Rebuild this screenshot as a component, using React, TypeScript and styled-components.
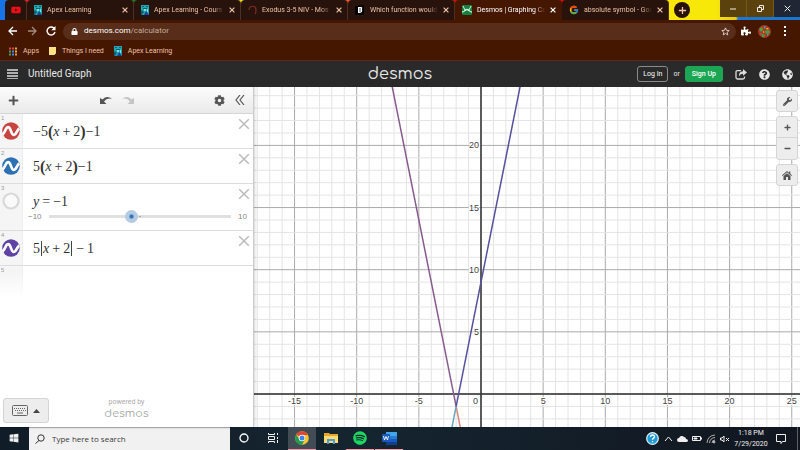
import React from "react";
import styled, { createGlobalStyle, css } from "styled-components";
import {
  FaWindows,
  FaSpotify,
  FaWrench,
  FaQuestionCircle,
  FaGlobeAmericas,
  FaYoutube,
  FaLock,
  FaCog,
  FaPlus,
  FaMinus,
  FaPuzzlePiece,
} from "react-icons/fa";
import { FcGoogle } from "react-icons/fc";

const ui = `"Open Sans", "Noto Sans", sans-serif`;
const compact = `Roboto, "Liberation Sans", sans-serif`;
const arial = `"Liberation Sans", Arial, sans-serif`;

const GlobalStyle = createGlobalStyle`
  *, *::before, *::after { box-sizing: border-box; }
  body { margin: 0; background: #fff; overflow: hidden; }
  button, input { font: inherit; color: inherit; border: 0; padding: 0; margin: 0; background: none; }
  a { color: inherit; text-decoration: none; }
  svg { display: block; flex: none; }
`;

const Page = styled.div`
  display: flex;
  flex-direction: column;
  height: 100vh;
  font-family: ${ui};
`;

const TabStrip = styled.nav`
  display: flex;
  flex: none;
  height: 20px;
  padding-left: 5px;
  background: linear-gradient(90deg, #1673e8 0 10px, #e8202c 15px 70px, #14801c 90px 170px, #f2dc10 190px 280px, #ff5a1c 300px 400px, #d01008 410px 600px, #f8e80a 640px 715px, #e6c81a 736px, #1a78d0 738px);
`;

const Tab = styled.div<{ $active?: boolean; $pinned?: boolean }>`
  display: flex;
  align-items: center;
  gap: 5px;
  flex: ${(p) => (p.$pinned ? "0 0 22px" : "0 1 107px")};
  min-width: 0;
  padding: ${(p) => (p.$pinned ? "0 0 0 6px" : "0 5px 0 7px")};
  border-radius: 4px 4px 0 0;
  border-right: 1px solid ${(p) => (p.$active ? "#451600" : "#4d3022")};
  background: ${(p) => (p.$active ? "#451700" : "#28130c")};
  color: ${(p) => (p.$active ? "#fff" : "#edc3a5")};
`;

const TabLabel = styled.a`
  flex: 1;
  min-width: 0;
  overflow: hidden;
  white-space: nowrap;
  font: 7px/12px ${compact};
  mask-image: linear-gradient(90deg, #000 85%, transparent);
`;

const IconButton = styled.button`
  display: grid;
  place-items: center;
  flex: none;
`;

const NewTab = styled(IconButton)`
  width: 16px;
  height: 16px;
  margin: 2px 0 0 5px;
  border-radius: 50%;
  background: #28130c;
  color: #f0c8a8;
`;

const WindowControls = styled.div`
  display: flex;
  margin-left: auto;
  height: 17px;
`;

const WindowButton = styled(IconButton)<{ $close?: boolean }>`
  width: ${(p) => (p.$close ? "26px" : "27px")};
  border-right: ${(p) => (p.$close ? "0" : "1px solid #75591a")};
  background: ${(p) => (p.$close ? "#202634" : "#5b420c")};
  color: #eee;
`;

const AddressRow = styled.div`
  display: flex;
  align-items: center;
  flex: none;
  height: 22px;
  padding: 0 8px 0 6px;
  gap: 5px;
  background: #451700;
  color: #fff;
`;

const NavButton = styled(IconButton)<{ $dim?: boolean }>`
  width: 14px;
  height: 14px;
  opacity: ${(p) => (p.$dim ? 0.5 : 1)};
`;

const AddressBox = styled.label`
  display: flex;
  flex: 1;
  align-items: center;
  height: 17px;
  padding: 0 6px 0 8px;
  border-radius: 9px;
  background: #582d19;
  font: 8px/12px ${compact};
`;

const Host = styled.span`
  margin-left: 6px;
`;

const PathInput = styled.input`
  flex: 1;
  min-width: 0;
  color: #c3aa9d;
  outline: none;
`;

const AddressActions = styled.div`
  display: flex;
  align-items: center;
  gap: 7px;
`;

const Bookmarks = styled.nav`
  display: flex;
  align-items: center;
  flex: none;
  gap: 10px;
  height: 19px;
  padding-left: 9px;
  border-bottom: 1px solid #5c2a12;
  background: #451700;
  color: #edc3a5;
  font: 7px/12px ${compact};
`;

const Bookmark = styled.a`
  display: flex;
  align-items: center;
  gap: 6px;
`;

const AppHeader = styled.header`
  display: grid;
  grid-template-columns: 1fr auto 1fr;
  align-items: center;
  flex: none;
  height: 26px;
  padding: 0 7px;
  background: #2a2a2a;
  color: #e8e8e8;
  font: 10px/14px ${compact};
`;

const HeaderSide = styled.div<{ $end?: boolean }>`
  display: flex;
  align-items: center;
  justify-content: ${(p) => (p.$end ? "flex-end" : "flex-start")};
  gap: ${(p) => (p.$end ? "12px" : "9px")};
`;

const Account = styled.div`
  display: flex;
  align-items: center;
  gap: 5px;
  font-size: 7px;
`;

const AccountButton = styled.button<{ $primary?: boolean }>`
  height: 16px;
  padding: 0 ${(p) => (p.$primary ? "6px" : "5px")};
  border-radius: 3px;
  border: 1px solid ${(p) => (p.$primary ? "#1ca653" : "#8a8a8a")};
  background: ${(p) => (p.$primary ? "#1ca653" : "transparent")};
  color: #fff;
  font-weight: ${(p) => (p.$primary ? 500 : 400)};
  line-height: 14px;
  white-space: nowrap;
`;

const Wordmark = styled.span<{ $small?: boolean }>`
  font-family: Comfortaa, Lato, sans-serif;
  font-size: ${(p) => (p.$small ? "11px" : "16px")};
  line-height: ${(p) => (p.$small ? "14px" : "22px")};
`;

const Main = styled.main`
  display: flex;
  flex: 1;
  min-height: 0;
`;

const Panel = styled.section`
  display: flex;
  flex-direction: column;
  flex: none;
  width: 254px;
  border-right: 1px solid #ccc;
  box-shadow: 0 0 3px rgba(0, 0, 0, 0.3);
  background: #fff;
  z-index: 1;
`;

const PanelBar = styled.div`
  display: flex;
  align-items: center;
  justify-content: space-between;
  flex: none;
  height: 27px;
  padding: 0 8px;
  border-bottom: 1px solid #d5d5d5;
  background: linear-gradient(#fcfcfc, #eaeaea);
  color: #555;
`;

const BarGroup = styled.div`
  display: flex;
  align-items: center;
  gap: 10px;
`;

const ExpressionList = styled.ol`
  flex: 1;
  margin: 0;
  padding: 0;
  list-style: none;
`;

const Row = styled.li<{ $tall?: boolean; $last?: boolean }>`
  display: flex;
  height: ${(p) => (p.$tall ? "47px" : "35px")};
  border-bottom: ${(p) => (p.$last ? "0" : "1px solid #ddd")};
`;

const Gutter = styled.div<{ $fade?: boolean }>`
  display: flex;
  flex-direction: column;
  flex: none;
  width: 23px;
  padding: 1px 1px 0 1px;
  border-right: 1px solid #eee;
  background: #f5f5f5;
  color: #999;
  font: 6px/7px ${arial};
  ${(p) => p.$fade && css`mask-image: linear-gradient(#000 20%, transparent 90%);`}
`;

const RowBody = styled.div`
  flex: 1;
  min-width: 0;
  padding: 9px 0 0 10px;
`;

const Formula = styled.div`
  display: flex;
  align-items: center;
  height: 17px;
  color: #333;
  font: 14px/17px "Liberation Serif", serif;
  white-space: pre;
`;

const Op = styled.span<{ $tight?: boolean }>`
  padding: 0 ${(p) => (p.$tight ? "0" : "3px")};
`;

const Paren = styled.span`
  font-size: 16px;
  font-weight: 700;
  line-height: 16px;
`;

const Bar = styled.span`
  width: 1px;
  height: 15px;
  margin: 0 1px;
  background: #444;
`;

const DeleteButton = styled(IconButton)`
  align-self: flex-start;
  width: 14px;
  height: 14px;
  margin: 3px 2px 0 0;
  color: #bbb;
`;

const SliderRow = styled.div`
  display: flex;
  align-items: center;
  gap: 7px;
  height: 13px;
  margin: 0 -10px 0 -5px;
  color: #888;
  font: 8px/13px ${arial};
`;

const Slider = styled.input`
  appearance: none;
  width: 184px;
  height: 13px;
  background:
    radial-gradient(circle at 50% 50%, #aaa 1px, transparent 1px),
    linear-gradient(#e0e0e0, #e0e0e0) center / 100% 3px no-repeat;
  &::-webkit-slider-thumb {
    appearance: none;
    width: 13px;
    height: 13px;
    border-radius: 50%;
    background: radial-gradient(circle, #2d70b3 1px, #b5cbe2 3px);
  }
`;

const PanelFoot = styled.footer`
  display: grid;
  grid-template-columns: 46px 1fr 46px;
  flex: none;
  padding: 0 3px 4px;
`;

const KeypadButton = styled.button`
  display: flex;
  align-items: center;
  justify-content: center;
  gap: 5px;
  height: 25px;
  border: 1px solid #d3d3d3;
  border-radius: 3px;
  background: #ededed;
  color: #444;
`;

const Powered = styled.a`
  display: flex;
  flex-direction: column;
  align-items: center;
  color: #aaa;
  font: 7px/9px ${compact};
`;

const GraphArea = styled.section`
  display: grid;
  grid-template: minmax(0, 1fr) / minmax(0, 1fr);
  flex: 1;
  min-width: 0;
  background: #fff;
`;

const Plot = styled.svg`
  grid-area: 1 / 1;
  width: 100%;
  height: 100%;
  font: 9px ${arial};
`;

const GraphTools = styled.div`
  grid-area: 1 / 1;
  display: flex;
  flex-direction: column;
  gap: 4px;
  justify-self: end;
  align-self: start;
  margin: 3px 2px 0 0;
  color: #555;
`;

const ToolGroup = styled.div`
  width: 22px;
  border: 1px solid #d5d5d5;
  border-radius: 3px;
  background: #ededed;
`;

const ToolButton = styled(IconButton)`
  width: 20px;
  height: 20px;
  & + & {
    height: 22px;
    border-top: 1px solid #d5d5d5;
  }
`;

const Taskbar = styled.footer`
  display: flex;
  flex: none;
  height: 23px;
  background: linear-gradient(90deg, #101c28, #152530 45%, #11161f);
  color: #f0f0f0;
`;

const TaskButton = styled(IconButton)<{ $open?: boolean; $active?: boolean }>`
  width: 28px;
  margin-right: 1px;
  background: ${(p) => (p.$active ? "#414c55" : "transparent")};
  border-bottom: 1px solid ${(p) => (p.$open || p.$active ? "#f49aa0" : "transparent")};
`;

const Search = styled.label`
  display: flex;
  align-items: center;
  gap: 7px;
  width: 201px;
  padding-left: 6px;
  border-top: 1px solid #bbb;
  background: #f1f1f1;
  color: #333;
`;

const SearchInput = styled.input`
  flex: 1;
  min-width: 0;
  font-size: 8px;
  line-height: 14px;
  outline: none;
  &::placeholder { color: #3a3a3a; opacity: 1; }
`;

const Tray = styled.div`
  display: flex;
  align-items: center;
  gap: 4px;
  margin-left: auto;
  padding-right: 7px;
`;

const Clock = styled.time`
  width: 34px;
  text-align: center;
  white-space: nowrap;
  font: 7px/11px ${compact};
`;

const ShowDesktop = styled.button`
  width: 3px;
  border-left: 1px solid #59616a;
`;

const Apex = () => (
  <svg width="8" height="10" viewBox="0 0 8 10">
    <path fill="#22a7ae" d="M0 0h8v10H0z" />
    <path fill="#0d626d" d="M1 1h2v1H1zM5 1h2v1H5zM2 3h4v1H2zM1 5l2 2-2 3H0V6z" />
    <path fill="#1c3f96" d="M5 6l3 4H3z" />
    <path fill="#7de0de" d="M3 4h2v2H3zM6 4h1v3H6z" />
  </svg>
);

const Cross = ({ size = 7, width = 1.2 }: { size?: number; width?: number }) => (
  <svg width={size} height={size} viewBox="0 0 10 10" fill="none" stroke="currentColor" strokeWidth={(width * 10) / size}>
    <path d="M1 1l8 8M9 1L1 9" />
  </svg>
);

const Plus = ({ size = 9 }: { size?: number }) => (
  <svg width={size} height={size} viewBox="0 0 10 10" stroke="currentColor" strokeWidth="1.4">
    <path d="M5 1v8M1 5h8" />
  </svg>
);

const Moses = () => (
  <svg width="9" height="10" viewBox="0 0 9 10" fill="none" stroke="#7d2b20" strokeWidth="1.2">
    <path d="M1 5C1 0 8 0 8 5q0 3-1 4" />
  </svg>
);

const Brainly = () => (
  <svg width="10" height="10" viewBox="0 0 10 10">
    <path fill="#000" d="M0 1l9-1v10H0z" />
    <path fill="#fff" d="M3 2h3q2 0 1 2 1 4-3 4H3z" />
    <path stroke="#000" strokeWidth=".7" d="M4 4h2M4 6h2" />
  </svg>
);

const DesmosIcon = () => (
  <svg width="10" height="10" viewBox="0 0 10 10" fill="none">
    <rect width="10" height="10" rx="1" fill="#15803f" />
    <path stroke="#d8f2df" strokeWidth="1" d="M1 1l2.500 5M9 1L6.500 6" />
    <path stroke="#d8f2df" strokeWidth="1.300" d="M0 7q2 0 3-1.500 2-2 4 0Q8 7 10 7" />
  </svg>
);

const Arrow = ({ right = false }: { right?: boolean }) => (
  <svg width="10" height="10" viewBox="0 0 10 10" fill="none" stroke="currentColor" strokeWidth="1.3">
    <path d={right ? "M1 5h8M5 1l4 4-4 4" : "M9 5H1M5 1L1 5l4 4"} />
  </svg>
);

const Reload = () => (
  <svg width="10" height="10" viewBox="0 0 10 10" fill="none" stroke="currentColor" strokeWidth="1.4">
    <path d="M8 2.2A4 4 0 1 0 9 6" />
    <path d="M9.5 0v4.2H5.3z" fill="currentColor" stroke="none" />
  </svg>
);

const Star = () => (
  <svg width="9" height="9" viewBox="0 0 20 20" fill="none" stroke="#e6d6cd" strokeWidth="2">
    <path d="M10 2l2.3 5.4 5.9.5-4.5 3.9 1.4 5.8L10 14.5l-5.1 3.1 1.4-5.8L1.800 7.900l5.900-.5z" />
  </svg>
);

const Avatar = () => (
  <svg width="13" height="13" viewBox="0 0 13 13">
    <circle cx="6.500" cy="6.500" r="6.500" fill="#a93a20" />
    <path fill="#3fa646" d="M1 4l3-2 1 3-2 2zM7 6l4-1 1 3-4 1zM4 9l3 1-1 2H4z" />
    <path fill="#35a7c4" d="M2 8l2 1-1 1zM6 1l2 1-2 2zM9 9l2 0-2 2z" />
    <path fill="#e4ae3a" d="M8 3l3 0-2 2zM5 6l2 1-2 1z" />
  </svg>
);

const AppsGrid = () => (
  <svg width="8" height="9" viewBox="0 0 8 9">
    {["#e04a3b", "#e04a3b", "#e8b33a", "#43a35a", "#4287e8", "#e8b33a", "#43a35a", "#4287e8", "#e0a03a"].map((c, i) => (
      <rect key={i} x={(i % 3) * 3} y={Math.floor(i / 3) * 3 + 0.5} width="2" height="2" fill={c} />
    ))}
  </svg>
);

const Note = () => (
  <svg width="7" height="8" viewBox="0 0 7 8">
    <path fill="#ffe183" d="M0 0h7v6L5 8H0z" />
    <path fill="#fff6cc" d="M5 8V6h2z" />
  </svg>
);

const Share = () => (
  <svg width="12" height="11" viewBox="0 0 12 11" fill="none" stroke="#ddd" strokeWidth="1.3">
    <path d="M6 1.600H2.500Q1 1.600 1 3v5.500Q1 10 2.500 10H8q1.500 0 1.500-1.500V7.500" />
    <path d="M8 0l4 3.400L8 6.700V4.700Q5 4.500 4 7.500 3.500 2.500 8 2.200z" fill="#ddd" stroke="none" />
  </svg>
);

const Home = () => (
  <svg width="10" height="9" viewBox="0 0 10 9" fill="currentColor">
    <path d="M5 0l2 1.700V.6h1.300v2.200L10 4.200l-.6.7L5 1.300.6 4.900 0 4.200z" />
    <path d="M5 2.200l3.500 2.900V9H6V6H4v3H1.500V5.100z" />
  </svg>
);

const Undo = ({ flip = false }: { flip?: boolean }) => (
  <svg width="12" height="9" viewBox="0 0 12 9" fill={flip ? "#c4c4c4" : "#555"}>
    <path d={flip ? "M0 3Q5-1 9.500 3.500L12 2v6H5.500L8 5.500Q5 1.500 0 3z" : "M12 3Q7-1 2.500 3.500L0 2v6h6.500L4 5.500Q7 1.500 12 3z"} />
  </svg>
);

const Collapse = () => (
  <svg width="10" height="10" viewBox="0 0 10 10" fill="none" stroke="currentColor" strokeWidth="1.200">
    <path d="M5 0L1 5l4 5M9 0L5 5l4 5" />
  </svg>
);

const Curve = ({ color }: { color: string }) => (
  <svg width="18" height="18" viewBox="0 0 18 18">
    {color ? (
      <>
        <circle cx="9" cy="9" r="8.800" fill={color} />
        <path d="M.5 12.500C3 11.500 3.500 5 6.200 5.200 9 5.400 9 13 11.800 13c2.500 0 3-5 5.500-6.500" fill="none" stroke="#fff" strokeWidth="2.700" />
      </>
    ) : (
      <circle cx="9" cy="9" r="7.500" fill="#fafafa" stroke="#d8d8d8" strokeWidth="2.200" />
    )}
  </svg>
);

const Keyboard = () => (
  <svg width="16" height="11" viewBox="0 0 16 11" fill="none" stroke="#666">
    <rect x=".5" y=".5" width="15" height="10" rx="1" />
    <path strokeDasharray="1 1" d="M2 3.500h12M3 5.500h11" />
    <path d="M5 8h6" />
  </svg>
);

const Chrome = () => (
  <svg width="14" height="14" viewBox="0 0 14 14">
    <circle cx="7" cy="7" r="6.800" fill="#f7c52d" />
    <path d="M7 7L1.100 3.600A6.800 6.800 0 0 1 12.900 3.600L12.900 4H7z" fill="#df4638" />
    <path d="M1.100 3.600A6.800 6.800 0 0 0 7 13.800L9.700 8.500 7 7 4.300 8.500z" fill="#249b55" />
    <circle cx="7" cy="7" r="3.200" fill="#fff" />
    <circle cx="7" cy="7" r="2.500" fill="#4085ef" />
  </svg>
);

const TaskView = () => (
  <svg width="11" height="10" viewBox="0 0 11 10" fill="none" stroke="currentColor">
    <path d="M.5 0v1.500h6V0M.5 10V8.500h6V10M.5 3.500h6v3h-6zM9.500 0v2M9.500 4v2M9.500 7v3" />
  </svg>
);

const Folder = () => (
  <svg width="14" height="12" viewBox="0 0 14 12">
    <path fill="#e5a72c" d="M0 1h5l1 1h8v9H0z" />
    <path fill="#ffdb72" d="M0 4h14v7H0z" />
    <path fill="#4a9bd6" d="M3 7h8v5H9V9H5v3H3z" />
  </svg>
);

const Word = () => (
  <svg width="15" height="13" viewBox="0 0 15 13">
    <path fill="#41a5ee" d="M4 0h11v4H4z" />
    <path fill="#2b7cd3" d="M4 4h11v3H4z" />
    <path fill="#185abd" d="M4 7h11v3H4z" />
    <path fill="#103f91" d="M4 10h11v3H4z" />
    <rect y="2" width="8" height="8" rx="1" fill="#185abd" />
    <path d="M1.500 4l1 4L4 4.500 5.500 8l1-4" fill="none" stroke="#fff" strokeWidth=".9" />
  </svg>
);

const UNIT = 12.43;
const OX = 227;
const OY = 307;
const px = (x: number) => OX + x * UNIT;
const py = (y: number) => OY - y * UNIT;
const range = (a: number, b: number) => Array.from({ length: b - a + 1 }, (_, i) => a + i);

const Graph = () => (
  <Plot viewBox="0 0 546 340" preserveAspectRatio="xMinYMin slice" role="img" aria-label="Graph of the expressions">
    {range(-19, 60).map((x) => (
      <path key={x} d={`M${px(x)} 0V900`} stroke={x % 5 ? "#e4e4e4" : "#aaa"} />
    ))}
    {range(-50, 25).map((y) => (
      <path key={y} d={`M0 ${py(y)}H1600`} stroke={y % 5 ? "#e4e4e4" : "#aaa"} />
    ))}
    <path d={`M${px(0)} 0V900M0 ${py(0)}H1600`} stroke="#333" strokeWidth="1.500" />
    <g fill="#444" stroke="#fff" strokeWidth="2" paintOrder="stroke">
      {[-15, -10, -5, 5, 10, 15, 20, 25].map((n) => (
        <text key={n} x={px(n)} y={OY + 10} textAnchor="middle">{n}</text>
      ))}
      {[5, 10, 15, 20].map((n) => (
        <text key={n} x={OX - 2} y={py(n) + 3} textAnchor="end">{n}</text>
      ))}
      <text x={OX - 3} y={OY + 10} textAnchor="end">0</text>
    </g>
    <g fill="none" strokeWidth="1.500">
      <path d={`M${px(-2)} ${py(-1)}L${px(-1)} ${py(-6)}`} stroke="#d98878" />
      <path d={`M${px(-2)} ${py(-1)}L${px(-3)} ${py(-6)}`} stroke="#69a5c4" />
      <path d={`M${px(-7.4)} ${py(26)}L${px(-2)} ${py(-1)}`} stroke="#875b8d" />
      <path d={`M${px(-2)} ${py(-1)}L${px(3.4)} ${py(26)}`} stroke="#5652a0" />
    </g>
  </Plot>
);

const rows: { color: string; formula: React.ReactNode; slider?: boolean }[] = [
  { color: "#c74440", formula: <>−5<Paren>(</Paren><i>x</i><Op>+</Op>2<Paren>)</Paren><Op $tight>−</Op>1</> },
  { color: "#2d70b3", formula: <>5<Paren>(</Paren><i>x</i><Op>+</Op>2<Paren>)</Paren><Op $tight>−</Op>1</> },
  { color: "", formula: <><i>y</i><Op>=</Op>−1</>, slider: true },
  { color: "#6042a6", formula: <>5<Bar /><i>x</i><Op>+</Op>2<Bar /><Op>−</Op>1</> },
];

const tabs = [
  { icon: <Apex />, label: "Apex Learning" },
  { icon: <Apex />, label: "Apex Learning - Cours" },
  { icon: <Moses />, label: "Exodus 3-5 NIV - Mos" },
  { icon: <Brainly />, label: "Which function would" },
  { icon: <DesmosIcon />, label: "Desmos | Graphing Ca", active: true },
  { icon: <FcGoogle size={10} />, label: "absolute symbol - Goo" },
];

export default function App() {
  return (
    <Page>
      <GlobalStyle />
      <TabStrip>
        <Tab $pinned><FaYoutube size={10} color="#f00d18" /></Tab>
        {tabs.map((t, i) => (
          <Tab key={i} $active={t.active}>
            {t.icon}
            <TabLabel href="#">{t.label}</TabLabel>
            <IconButton aria-label="Close tab"><Cross size={6} /></IconButton>
          </Tab>
        ))}
        <NewTab aria-label="New tab"><Plus /></NewTab>
        <WindowControls>
          <WindowButton aria-label="Minimize">
            <svg width="6" height="2"><path d="M0 1h6" stroke="currentColor" /></svg>
          </WindowButton>
          <WindowButton aria-label="Restore">
            <svg width="7" height="7" fill="none" stroke="currentColor"><path d="M.5 2.500h4v4h-4zM2.500 2V.5h4v4H5" /></svg>
          </WindowButton>
          <WindowButton $close aria-label="Close"><Cross size={7} width={1} /></WindowButton>
        </WindowControls>
      </TabStrip>

      <AddressRow>
        <NavButton aria-label="Back"><Arrow /></NavButton>
        <NavButton $dim aria-label="Forward"><Arrow right /></NavButton>
        <NavButton aria-label="Reload"><Reload /></NavButton>
        <AddressBox>
          <FaLock size={7} />
          <Host>desmos.com</Host>
          <PathInput aria-label="Address" defaultValue="/calculator" />
          <Star />
        </AddressBox>
        <AddressActions>
          <IconButton aria-label="Extensions"><FaPuzzlePiece size={10} /></IconButton>
          <IconButton aria-label="Profile"><Avatar /></IconButton>
          <NavButton aria-label="Menu">
            <svg width="2" height="10" fill="currentColor"><path d="M0 0h2v2H0zM0 4h2v2H0zM0 8h2v2H0z" /></svg>
          </NavButton>
        </AddressActions>
      </AddressRow>

      <Bookmarks>
        <Bookmark href="#"><AppsGrid />Apps</Bookmark>
        <Bookmark href="#"><Note />Things I need</Bookmark>
        <Bookmark href="#"><Apex />Apex Learning</Bookmark>
      </Bookmarks>

      <AppHeader>
        <HeaderSide>
          <IconButton aria-label="Open menu">
            <svg width="12" height="10" stroke="#ddd" strokeWidth="1.500"><path d="M0 1h11M0 4h11M0 7h11M0 10h11" /></svg>
          </IconButton>
          Untitled Graph
        </HeaderSide>
        <Wordmark>desmos</Wordmark>
        <HeaderSide $end>
          <Account>
            <AccountButton>Log In</AccountButton>
            or
            <AccountButton $primary>Sign Up</AccountButton>
          </Account>
          <IconButton aria-label="Share"><Share /></IconButton>
          <IconButton aria-label="Help"><FaQuestionCircle size={11} /></IconButton>
          <IconButton aria-label="Language"><FaGlobeAmericas size={11} /></IconButton>
        </HeaderSide>
      </AppHeader>

      <Main>
        <Panel>
          <PanelBar>
            <IconButton aria-label="Add item"><FaPlus size={11} /></IconButton>
            <BarGroup>
              <IconButton aria-label="Undo"><Undo /></IconButton>
              <IconButton aria-label="Redo"><Undo flip /></IconButton>
            </BarGroup>
            <BarGroup>
              <IconButton aria-label="Edit list"><FaCog size={11} /></IconButton>
              <IconButton aria-label="Hide list"><Collapse /></IconButton>
            </BarGroup>
          </PanelBar>
          <ExpressionList>
            {rows.map((r, i) => (
              <Row key={i} $tall={r.slider}>
                <Gutter>
                  {i + 1}
                  <IconButton aria-label={`Toggle expression ${i + 1}`}><Curve color={r.color} /></IconButton>
                </Gutter>
                <RowBody>
                  <Formula>{r.formula}</Formula>
                  {r.slider && (
                    <SliderRow>
                      −10
                      <Slider type="range" min={-10} max={10} defaultValue={-1} aria-label="y" />
                      10
                    </SliderRow>
                  )}
                </RowBody>
                <DeleteButton aria-label={`Delete expression ${i + 1}`}><Cross size={12} width={1.5} /></DeleteButton>
              </Row>
            ))}
            <Row $last><Gutter $fade>5</Gutter></Row>
          </ExpressionList>
          <PanelFoot>
            <KeypadButton aria-label="Show keypad">
              <Keyboard />
              <svg width="7" height="4"><path d="M0 4l3.500-4L7 4z" fill="#444" /></svg>
            </KeypadButton>
            <Powered href="#">powered by<Wordmark $small>desmos</Wordmark></Powered>
          </PanelFoot>
        </Panel>
        <GraphArea>
          <Graph />
          <GraphTools>
            <ToolGroup><ToolButton aria-label="Graph settings"><FaWrench size={9} /></ToolButton></ToolGroup>
            <ToolGroup>
              <ToolButton aria-label="Zoom in"><FaPlus size={7} /></ToolButton>
              <ToolButton aria-label="Zoom out"><FaMinus size={7} /></ToolButton>
            </ToolGroup>
            <ToolGroup><ToolButton aria-label="Default viewport"><Home /></ToolButton></ToolGroup>
          </GraphTools>
        </GraphArea>
      </Main>

      <Taskbar>
        <TaskButton aria-label="Start"><FaWindows size={10} /></TaskButton>
        <Search>
          <svg width="10" height="10" viewBox="0 0 10 10" fill="none" stroke="#333"><circle cx="6" cy="4" r="3.200" /><path d="M4 6.500L.5 9.500" /></svg>
          <SearchInput aria-label="Search" placeholder="Type here to search" />
        </Search>
        <TaskButton aria-label="Cortana">
          <svg width="10" height="10" fill="none" stroke="#fff" strokeWidth="1.300"><circle cx="5" cy="5" r="4" /></svg>
        </TaskButton>
        <TaskButton aria-label="Task view"><TaskView /></TaskButton>
        <TaskButton $active aria-label="Chrome"><Chrome /></TaskButton>
        <TaskButton aria-label="File Explorer"><Folder /></TaskButton>
        <TaskButton $open aria-label="Spotify"><FaSpotify size={14} color="#1ed760" /></TaskButton>
        <TaskButton $open aria-label="Word"><Word /></TaskButton>
        <Tray>
          <svg width="13" height="13" viewBox="0 0 13 13" fill="none">
            <circle cx="6.500" cy="6.500" r="5.800" fill="#1e9bd7" stroke="#e8f4fa" strokeWidth="1.200" />
            <path d="M4.500 5q0-2 2-2t2 1.800c0 1.400-2 1.300-2 3M6.500 9v1.300" stroke="#fff" strokeWidth="1.300" />
          </svg>
          <svg width="10" height="6" viewBox="0 0 10 6" fill="none" stroke="currentColor"><path d="M2 5l3.500-4L9 5" /></svg>
          <svg width="11" height="8" viewBox="0 0 11 8" fill="currentColor"><path d="M2 7a2 2 0 0 1 0-4 3 3 0 0 1 5-1q2 0 2 2 2 0 2 1.500T9 7z" /></svg>
          <svg width="10" height="7" viewBox="0 0 10 7" fill="none" stroke="currentColor"><path d="M.5 1.500h8v4h-8z" /><path fill="currentColor" d="M2 3h3v1H2zM9 3h1v1H9z" /></svg>
          <svg width="10" height="10" viewBox="0 0 10 10" fill="none" stroke="#aaa"><path d="M1 9a8 8 0 0 1 8-8M3.500 9A5.500 5.500 0 0 1 9 3.500M6 9a3 3 0 0 1 3-3" /><circle cx="8" cy="8" r="1" fill="#fff" /></svg>
          <svg width="10" height="8" viewBox="0 0 10 8" fill="none" stroke="currentColor"><path d="M.5 3h1.500l2-2v6L2 5H.5zM6 3l3 3M9 3L6 6" /></svg>
          <Clock>1:18 PM<br />7/29/2020</Clock>
          <IconButton aria-label="Notifications">
            <svg width="18" height="12" viewBox="0 0 18 12" fill="none" stroke="currentColor"><path d="M4.500 1.500h9v7h-3l-1.500 2v-2H4.500z" /></svg>
          </IconButton>
        </Tray>
        <ShowDesktop aria-label="Show desktop" />
      </Taskbar>
    </Page>
  );
}
